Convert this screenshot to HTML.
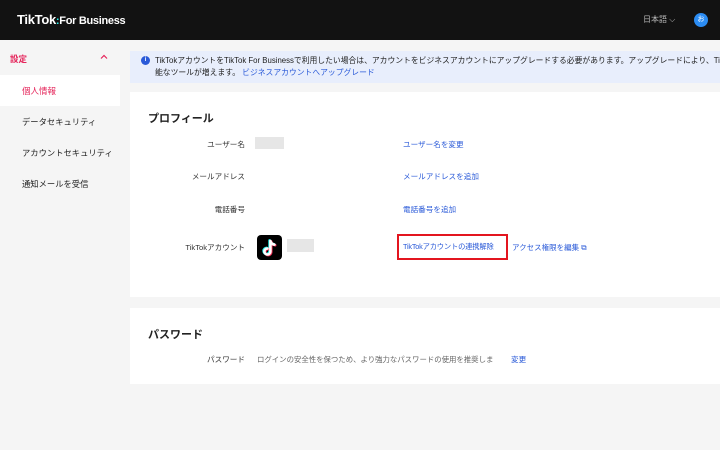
<!DOCTYPE html>
<html><head><meta charset="utf-8"><style>
*{margin:0;padding:0;box-sizing:border-box}
body{width:720px;height:450px;background:#f5f5f5;font-family:"Liberation Sans","Noto Sans CJK JP",sans-serif;font-size:7.6px;color:#222;position:relative;overflow:hidden}
.a{position:absolute;white-space:nowrap}
.hdr{left:0;top:0;width:720px;height:40px;background:#121212}
.link{color:#2a5ad8}
.lbl{color:#333;text-align:right;width:120px;left:125px}
</style></head><body>
<div class="a hdr"></div>
<div class="a" style="left:17px;top:12px;color:#fff;font-size:13px;font-weight:bold;letter-spacing:-0.3px">TikTok<span style="color:#25f4ee;font-size:11px">:</span><span style="font-size:11px;font-weight:bold">For Business</span></div>
<div class="a" style="left:643px;top:14px;color:#bbb;font-size:8px">日本語 ⌵</div>
<div class="a" style="left:694px;top:13px;width:14px;height:14px;border-radius:50%;background:#2b8cf3;color:#fff;font-size:7px;text-align:center;line-height:14px">お</div>

<div class="a" style="left:10px;top:53px;color:#e5245a;font-weight:bold;font-size:8.5px">設定</div>
<svg class="a" style="left:100px;top:54px" width="8" height="6"><path d="M1 4.5L4 1.5L7 4.5" stroke="#e5245a" fill="none" stroke-width="1.2"/></svg>
<div class="a" style="left:0;top:75px;width:120px;height:31px;background:#fff"></div>
<div class="a" style="left:22px;top:85px;color:#e5245a;font-size:8.5px">個人情報</div>
<div class="a" style="left:22px;top:116px;font-size:8.3px">データセキュリティ</div>
<div class="a" style="left:22px;top:147px;font-size:8.3px">アカウントセキュリティ</div>
<div class="a" style="left:22px;top:178px;font-size:8.3px">通知メールを受信</div>

<div class="a" style="left:130px;top:51px;width:590px;height:32px;background:#e8eefc;overflow:hidden">
<div class="a" style="left:11px;top:5px;width:9px;height:9px;border-radius:50%;background:#2a5ad8;color:#fff;font-size:6px;text-align:center;line-height:9px;font-weight:bold">i</div>
<div class="a" style="left:25px;top:4px;font-size:7.8px;line-height:12px">TikTokアカウントをTikTok For Businessで利用したい場合は、アカウントをビジネスアカウントにアップグレードする必要があります。アップグレードにより、TikTokでオーディエンス<br>能なツールが増えます。 <span class="link">ビジネスアカウントへアップグレード</span></div>
</div>

<div class="a" style="left:130px;top:92px;width:590px;height:205px;background:#fff"></div>
<div class="a" style="left:148px;top:110px;font-size:11px;font-weight:bold">プロフィール</div>
<div class="a lbl" style="top:139px">ユーザー名</div>
<div class="a" style="left:255px;top:137px;width:29px;height:12px;background:#e6e6e6"></div>
<div class="a link" style="left:403px;top:139px">ユーザー名を変更</div>
<div class="a lbl" style="top:171px">メールアドレス</div>
<div class="a link" style="left:403px;top:171px">メールアドレスを追加</div>
<div class="a lbl" style="top:204px">電話番号</div>
<div class="a link" style="left:403px;top:204px">電話番号を追加</div>
<div class="a lbl" style="top:242px">TikTokアカウント</div>
<div class="a" style="left:257px;top:235px;width:25px;height:25px;border-radius:4px;background:#000"></div>
<svg class="a" style="left:257px;top:235px" width="25" height="25" viewBox="0 0 25 25">
<g fill="none" stroke-width="2.6" stroke-linecap="round">
<path d="M13.4 6v10.5a3 3 0 1 1-3-3M13.4 6c.5 2 2 3.4 4 3.6" stroke="#25f4ee" transform="translate(-.8,-.6)"/>
<path d="M13.4 6v10.5a3 3 0 1 1-3-3M13.4 6c.5 2 2 3.4 4 3.6" stroke="#fe2c55" transform="translate(.8,.6)"/>
<path d="M13.4 6v10.5a3 3 0 1 1-3-3M13.4 6c.5 2 2 3.4 4 3.6" stroke="#fff"/>
</g></svg>
<div class="a" style="left:287px;top:239px;width:27px;height:13px;background:#e6e6e6"></div>
<div class="a" style="left:397px;top:234px;width:111px;height:26px;border:2px solid #e3151f"></div>
<div class="a link" style="left:403px;top:242px;font-size:7.3px;letter-spacing:-0.2px">TikTokアカウントの連携解除</div>
<div class="a link" style="left:512px;top:242px;font-size:7.5px">アクセス権限を編集 ⧉</div>

<div class="a" style="left:130px;top:308px;width:590px;height:76px;background:#fff"></div>
<div class="a" style="left:148px;top:326px;font-size:11px;font-weight:bold">パスワード</div>
<div class="a lbl" style="top:354px">パスワード</div>
<div class="a" style="left:257px;top:354px;color:#666;font-size:7.4px;width:236px;overflow:hidden">ログインの安全性を保つため、より強力なパスワードの使用を推奨しま...</div>
<div class="a link" style="left:511px;top:354px">変更</div>
</body></html>
